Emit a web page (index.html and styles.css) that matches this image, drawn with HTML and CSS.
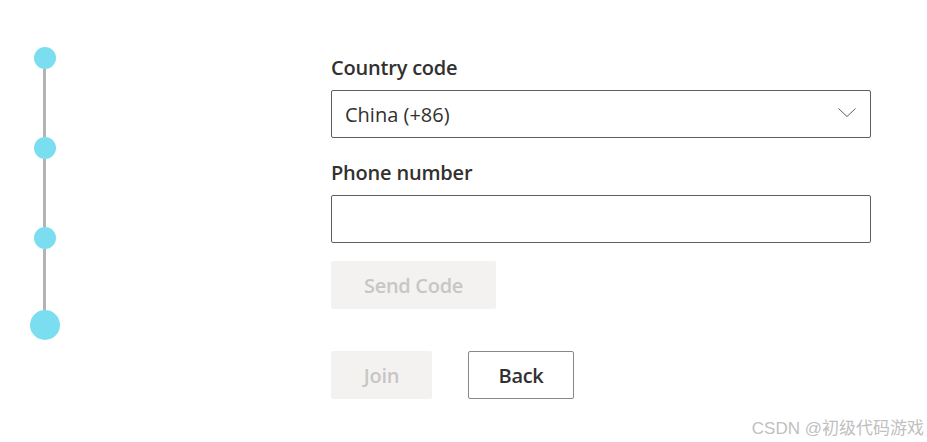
FILE: index.html
```html
<!DOCTYPE html>
<html>
<head>
<meta charset="utf-8">
<link rel="stylesheet" href="styles.css">
</head>
<body>
<div class="page">
  <div class="stepper">
    <div class="dot"></div>
    <div class="seg"></div>
    <div class="dot"></div>
    <div class="seg"></div>
    <div class="dot"></div>
    <div class="seg seg-last"></div>
    <div class="dot dot-big"></div>
  </div>
  <div class="form">
    <label class="label">Country code</label>
    <div class="select">
      <span class="select-text">China (+86)</span>
      <svg class="chevron" width="18" height="9" viewBox="0 0 18 9"><path d="M0.5 0.5 L9 8.5 L17.5 0.5" fill="none" stroke="#605e5c" stroke-width="1"/></svg>
    </div>
    <label class="label label-phone">Phone number</label>
    <div class="input"></div>
    <button class="btn btn-disabled btn-send">Send Code</button>
    <div class="actions">
      <button class="btn btn-disabled btn-join">Join</button>
      <button class="btn btn-default btn-back">Back</button>
    </div>
  </div>
</div>
<div class="watermark">CSDN @初级代码游戏</div>
</body>
</html>
```

FILE: styles.css
```css
html, body {
  margin: 0;
  padding: 0;
  background: #ffffff;
  font-family: "Open Sans", "Noto Sans", "Liberation Sans", sans-serif;
  color: #323130;
}
.page {
  display: flex;
  width: 927px;
  height: 442px;
  box-sizing: border-box;
}
.stepper {
  display: flex;
  flex-direction: column;
  align-items: center;
  width: 30px;
  margin-left: 30px;
  padding-top: 47px;
}
.dot {
  width: 22px;
  height: 22px;
  border-radius: 50%;
  background: #7adef0;
  flex: none;
}
.dot-big {
  width: 30px;
  height: 30px;
}
.seg {
  width: 3px;
  height: 68px;
  background: #b3b3b3;
  margin-right: 2px;
  flex: none;
}
.seg-last {
  height: 61px;
}
.form {
  margin-left: 271px;
  padding-top: 54px;
  width: 540px;
  display: flex;
  flex-direction: column;
}
.label {
  font-size: 20px;
  font-weight: 600;
  line-height: 28px;
  height: 28px;
  color: #323130;
  letter-spacing: -0.2px;
}
.label-phone {
  margin-top: 21px;
}
.select {
  margin-top: 8px;
  height: 48px;
  box-sizing: border-box;
  border: 1px solid #605e5c;
  border-radius: 2px;
  display: flex;
  align-items: center;
  justify-content: space-between;
  padding: 0 14px 0 13px;
}
.select-text {
  font-size: 20px;
  color: #323130;
  letter-spacing: 0;
}
.chevron {
  display: block;
  margin-top: -3px;
}
.input {
  margin-top: 8px;
  height: 48px;
  box-sizing: border-box;
  border: 1px solid #605e5c;
  border-radius: 2px;
}
.btn {
  font-family: inherit;
  font-size: 20px;
  font-weight: 600;
  height: 48px;
  box-sizing: border-box;
  border-radius: 2px;
  padding: 0;
  letter-spacing: -0.3px;
  cursor: default;
}
.btn-disabled {
  background: #f3f2f1;
  color: #c8c6c4;
  border: none;
}
.btn-default {
  background: #ffffff;
  color: #323130;
  border: 1px solid #8a8886;
}
.btn-send {
  margin-top: 18px;
  width: 165px;
}
.actions {
  display: flex;
  gap: 36px;
  margin-top: 42px;
}
.btn-join {
  width: 101px;
}
.btn-back {
  width: 106px;
}
.watermark {
  position: absolute;
  right: 3px;
  top: 414px;
  font-family: "Liberation Sans", "Noto Sans CJK SC", sans-serif;
  font-size: 17px;
  color: #c0c0c0;
}
```
